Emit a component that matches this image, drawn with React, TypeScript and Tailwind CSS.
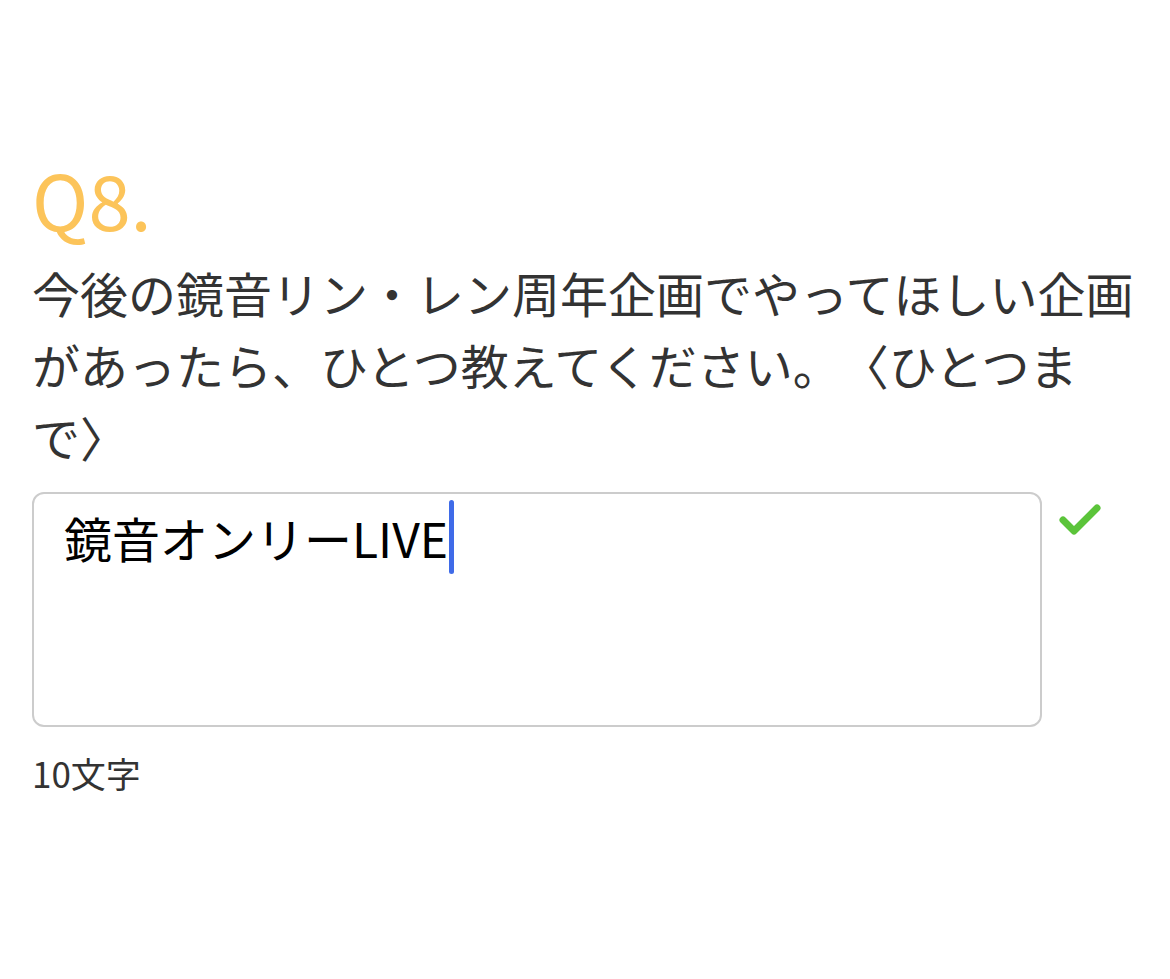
export default function App() {
  return (
    <div
      className="min-h-screen bg-white px-8 text-[#333] [text-spacing-trim:space-all]"
      style={{ fontFamily: '"Noto Sans CJK JP", "Noto Sans", sans-serif' }}
    >
      <div className="pt-[150px]">
        <h2 className="text-[76px] leading-[96px] font-normal text-[#fcc45a]">Q8.</h2>
        <p className="mt-[10px] text-[48px] leading-[72px]">
          今後の鏡音リン・レン周年企画でやってほしい企画があったら、ひとつ教えてください。〈ひとつまで〉
        </p>
        <div className="mt-[20px] flex items-start gap-4">
          <div className="h-[235px] w-[1010px] rounded-[12px] border-2 border-[#cccccc] px-[30px] pt-[6px]">
            <div className="flex items-center text-[48px] leading-[66px] text-black">
              <span>鏡音オンリーLIVE</span>
              <span className="ml-[1px] inline-block h-[74px] w-[5px] rounded-full bg-[#3f6be8]"></span>
            </div>
          </div>
          <svg width="44" height="36" viewBox="0 0 44 36" className="mt-[10px]">
            <path d="M5 18 L16 29 L39 6" fill="none" stroke="#5bc43a" strokeWidth="7" strokeLinecap="round" strokeLinejoin="round" />
          </svg>
        </div>
        <div className="mt-[22px] text-[35px] leading-[48px]">10文字</div>
      </div>
    </div>
  );
}
